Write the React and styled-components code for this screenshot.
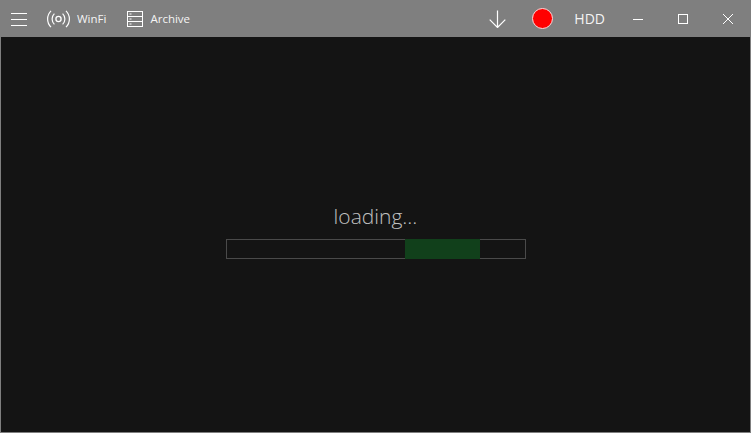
import React from "react";
import styled, { createGlobalStyle } from "styled-components";

const GlobalStyle = createGlobalStyle`
  html, body {
    margin: 0;
    padding: 0;
    background: #141414;
  }
  * {
    box-sizing: border-box;
  }
`;

const Window = styled.div`
  width: 751px;
  height: 433px;
  display: flex;
  flex-direction: column;
  background: #141414;
  border: 1px solid #7f7f7f;
  border-top: 0;
  font-family: "Open Sans", "Liberation Sans", sans-serif;
  overflow: hidden;
`;

const TitleBar = styled.div`
  height: 37px;
  margin: 0 -1px;
  padding-right: 1px;
  flex: none;
  display: flex;
  align-items: center;
  background: #7f7f7f;
  color: #fff;
`;

const Group = styled.div`
  display: flex;
  align-items: center;
  margin-left: ${props => props.ml || 0}px;
`;

const Spacer = styled.div`
  flex: 1;
`;

const Label = styled.span`
  font-size: ${props => props.size || 11.5}px;
  line-height: 16px;
  padding-top: 1px;
  margin-left: ${props => props.ml || 0}px;
  margin-right: ${props => props.mr || 0}px;
  color: #f4f4f4;
`;

const Icon = styled.svg`
  display: block;
  flex: none;
  fill: none;
  stroke: #fff;
  stroke-width: 1;
`;

const RecordDot = styled.div`
  width: 21px;
  height: 21px;
  border-radius: 50%;
  background: #ff0000;
  border: 1px solid #ffd8d8;
  margin-left: 26px;
`;

const CaptionButton = styled.div`
  width: 45px;
  height: 37px;
  display: flex;
  align-items: center;
  justify-content: center;
`;

const Body = styled.div`
  flex: 1;
  display: flex;
  flex-direction: column;
  align-items: center;
  padding-top: 165px;
`;

const LoadingText = styled.div`
  font-size: 21px;
  font-weight: 300;
  line-height: 28px;
  color: #c0c0c0;
  margin-bottom: 9px;
`;

const Track = styled.div`
  width: 300px;
  height: 20px;
  border: 1px solid #4a4a4a;
  display: flex;
`;

const Fill = styled.div`
  width: 75px;
  margin: -1px 0;
  margin-left: ${props => props.offset}px;
  background: #11401b;
`;

export default function App() {
  return (
    <>
      <GlobalStyle />
      <Window>
        <TitleBar>
          <Group ml={11}>
            <Icon width="16" height="14" viewBox="0 0 16 14">
              <path d="M0 1.5h16M0 7.5h16M0 13.5h16" />
            </Icon>
          </Group>
          <Group ml={20}>
            <Icon width="23" height="18" viewBox="0 0 23 18">
              <circle cx="11.5" cy="9" r="2.6" strokeWidth="1.3" />
              <path d="M7.4 3.6a7.5 7.5 0 0 0 0 10.8M15.6 3.6a7.5 7.5 0 0 1 0 10.8" strokeWidth="1.2" />
              <path d="M4 0.8a11.6 11.6 0 0 0 0 16.4M19 0.8a11.6 11.6 0 0 1 0 16.4" strokeWidth="1.2" />
            </Icon>
            <Label ml={7}>WinFi</Label>
          </Group>
          <Group ml={21}>
            <Icon width="16" height="16" viewBox="0 0 16 16">
              <rect x="0.5" y="0.5" width="15" height="15" />
              <path d="M0.5 5.5h15M0.5 10.5h15" />
              <path d="M2.5 3h2M2.5 8h2M2.5 13h2" />
            </Icon>
            <Label ml={7}>Archive</Label>
          </Group>
          <Spacer />
          <Icon width="17" height="18" viewBox="0 0 17 18">
            <path d="M8.5 0.5v17M0.7 9.7l7.8 7.8 7.8-7.8" strokeWidth="1.2" />
          </Icon>
          <RecordDot />
          <Label size={14} ml={21} mr={10}>HDD</Label>
          <CaptionButton>
            <Icon width="10" height="10" viewBox="0 0 10 10">
              <path d="M0 5.5h10" />
            </Icon>
          </CaptionButton>
          <CaptionButton>
            <Icon width="10" height="10" viewBox="0 0 10 10">
              <rect x="0.5" y="0.5" width="9" height="9" />
            </Icon>
          </CaptionButton>
          <CaptionButton>
            <Icon width="10" height="10" viewBox="0 0 10 10">
              <path d="M0 0l10 10M10 0L0 10" />
            </Icon>
          </CaptionButton>
        </TitleBar>
        <Body>
          <LoadingText>loading...</LoadingText>
          <Track>
            <Fill offset={178} />
          </Track>
        </Body>
      </Window>
    </>
  );
}
